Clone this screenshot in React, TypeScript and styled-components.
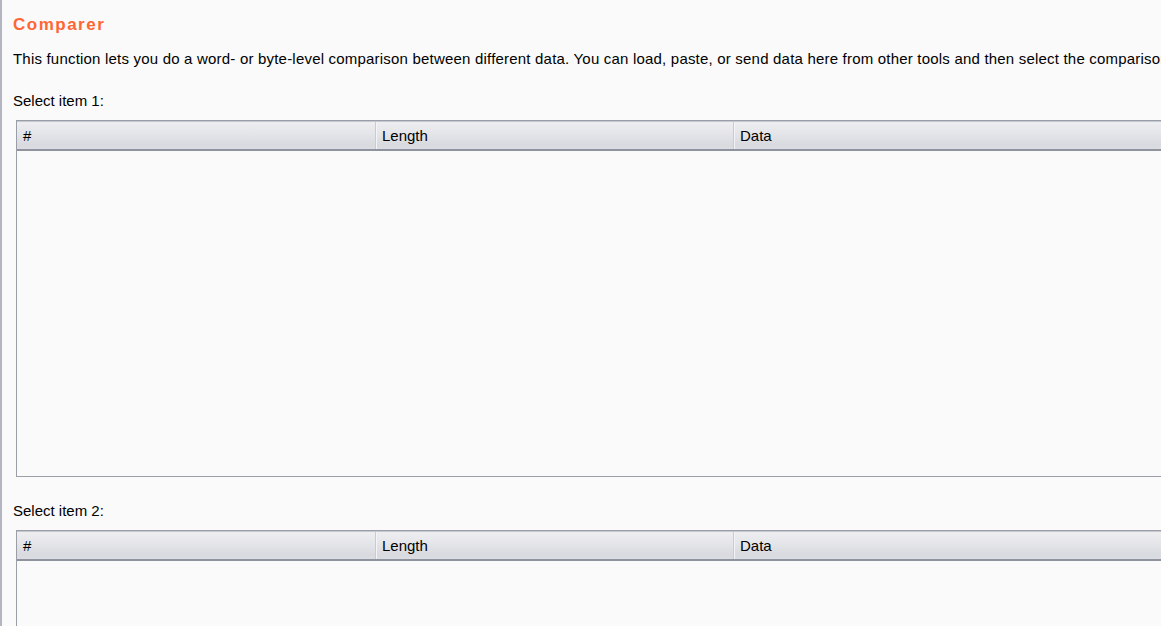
import React from "react";
import styled, { createGlobalStyle } from "styled-components";

const GlobalStyle = createGlobalStyle`
  html, body {
    margin: 0;
    padding: 0;
    background: #fafafa;
    overflow: hidden;
  }
  body {
    font-family: "Liberation Sans", Arial, sans-serif;
    color: #000;
  }
`;

const Page = styled.div`
  width: 1161px;
  height: 626px;
  box-sizing: border-box;
  border-left: 2px solid #b3b6c0;
  background: #fafafa;
  overflow: hidden;
  display: flex;
  flex-direction: column;
  padding: 15px 0 0 11px;
`;

const Title = styled.h1`
  margin: 0;
  font-size: 17px;
  line-height: 20px;
  font-weight: bold;
  letter-spacing: 1.5px;
  color: #ff6633;
`;

const Description = styled.p`
  margin: 15px 0 0 0;
  font-size: 15px;
  line-height: 18px;
  letter-spacing: 0.2px;
  white-space: nowrap;
`;

const Label = styled.div<{ $top: number }>`
  margin-top: ${(p) => p.$top}px;
  font-size: 15px;
  line-height: 18px;
`;

const Table = styled.div<{ $height: number }>`
  margin: 10px 0 0 3px;
  width: 1300px;
  height: ${(p) => p.$height}px;
  box-sizing: border-box;
  border: 1px solid #9a9ea8;
  border-right: none;
  background: #fafafa;
  display: flex;
  flex-direction: column;
  flex-shrink: 0;
`;

const HeaderRow = styled.div`
  display: grid;
  grid-template-columns: 358px 358px 1fr;
  height: 30px;
  box-sizing: border-box;
  border-top: 1px solid #c6c8cf;
  border-bottom: 2px solid #8f939d;
  background: linear-gradient(#eeeef1 0%, #e4e5e9 45%, #d9dadf 85%, #dcdde3 100%);
`;

const HeaderCell = styled.div`
  display: flex;
  align-items: center;
  padding-left: 6px;
  font-size: 15px;
  border-left: 1px solid #c9cbd1;
  box-shadow: inset 1px 0 0 #f4f4f6;
  &:first-child {
    border-left: none;
    box-shadow: none;
  }
`;

const Body = styled.div`
  flex: 1;
`;

function DataTable({ height }: { height: number }) {
  return (
    <Table $height={height}>
      <HeaderRow>
        <HeaderCell>#</HeaderCell>
        <HeaderCell>Length</HeaderCell>
        <HeaderCell>Data</HeaderCell>
      </HeaderRow>
      <Body />
    </Table>
  );
}

export default function App() {
  return (
    <>
      <GlobalStyle />
      <Page>
        <Title>Comparer</Title>
        <Description>
          This function lets you do a word- or byte-level comparison between different data. You can load, paste, or send data here from other tools and then select the comparison you want to perform.
        </Description>
        <Label $top={24}>Select item 1:</Label>
        <DataTable height={357} />
        <Label $top={25}>Select item 2:</Label>
        <DataTable height={200} />
      </Page>
    </>
  );
}
